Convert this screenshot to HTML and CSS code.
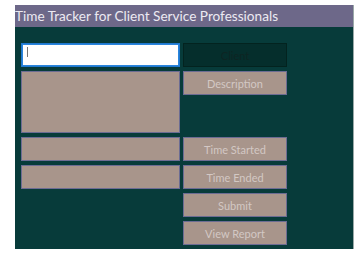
FILE: index.html
```html
<!DOCTYPE html>
<html>
<head>
<meta charset="utf-8">
<link rel="stylesheet" href="styles.css">
</head>
<body>
<div class="window">
  <div class="titlebar">Time Tracker for Client Service Professionals</div>
  <div class="content">
    <div class="field field-input r1"><span class="caret"></span></div>
    <div class="btn btn-dark c2 r1">Client</div>
    <div class="field field-tall"></div>
    <div class="btn c2 r2">Description</div>
    <div class="field r4"></div>
    <div class="btn c2 r4">Time Started</div>
    <div class="field r5"></div>
    <div class="btn c2 r5">Time Ended</div>
    <div class="btn c2 r6">Submit</div>
    <div class="btn c2 r7">View Report</div>
  </div>
</div>
</body>
</html>
```

FILE: styles.css
```css
html, body {
  margin: 0;
  padding: 0;
  background: #ffffff;
}
body {
  font-family: "Lato", "Open Sans", sans-serif;
}
.window {
  margin: 5px 0 0 15px;
  width: 339px;
  height: 244px;
  background: #073b3a;
  box-sizing: border-box;
  border-right: 1px solid #9aa9a8;
  overflow: hidden;
}
.titlebar {
  height: 22px;
  background: #6d6889;
  color: #eceaf2;
  font-size: 13.6px;
  line-height: 22px;
  white-space: nowrap;
}
.content {
  display: grid;
  grid-template-columns: 159px 104px;
  grid-template-rows: 24px 24px 34px 24px 24px 24px 24px;
  column-gap: 3px;
  row-gap: 4px;
  padding: 16px 0 0 6px;
}
.c2 { grid-column: 2; }
.r1 { grid-row: 1; }
.r2 { grid-row: 2; }
.r4 { grid-row: 4; }
.r5 { grid-row: 5; }
.r6 { grid-row: 6; }
.r7 { grid-row: 7; }
.field {
  grid-column: 1;
  background: #a8958b;
  border: 1px solid #6c6c93;
  box-sizing: border-box;
}
.field-tall {
  grid-row: 2 / span 2;
}
.field-input {
  background: #ffffff;
  border: 1px solid #1f78cf;
  box-shadow: inset 0 0 0 1px #2a85dc;
  position: relative;
}
.caret {
  position: absolute;
  left: 5px;
  top: 3px;
  width: 1px;
  height: 10px;
  background: #777;
}
.btn {
  background: #a8958b;
  border: 1px solid #6c6c93;
  box-sizing: border-box;
  color: #d3c8c4;
  font-size: 11px;
  display: flex;
  align-items: center;
  justify-content: center;
}
.btn-dark {
  background: #052e2c;
  border-color: #03231f;
  color: #0d2523;
}
```
